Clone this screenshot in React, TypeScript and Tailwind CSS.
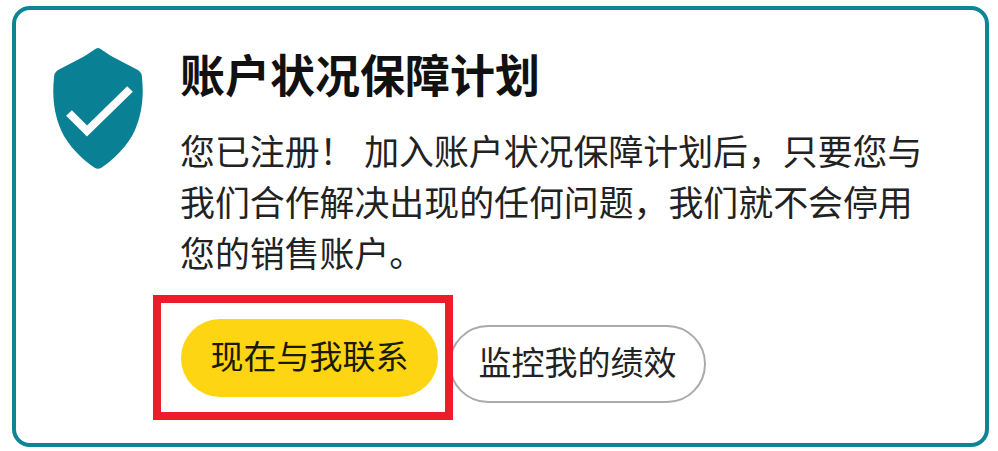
const cjk = "font-['Liberation_Sans','Noto_Sans_CJK_SC',sans-serif]";

function ShieldIcon() {
  return (
    <svg viewBox="0 0 90 121" className="h-[121px] w-[90px] shrink-0" aria-hidden="true">
      <path
        d="M45 0C47 0 50 3 60 9L83 21C87 23 89 25 89 30C91 48 89 66 82 82C75 98 60 112 48 120C46 121 44 121 42 120C30 112 15 98 8 82C1 66 -1 48 1 30C1 25 3 23 7 21L30 9C40 3 43 0 45 0Z"
        fill="#0a8094"
      />
      <path d="M16 65L34 83L77 41" fill="none" stroke="#fff" strokeWidth="8" />
    </svg>
  );
}

export default function App() {
  return (
    <div className={`h-[451px] w-[998px] overflow-hidden bg-white pl-3 pt-1.5 ${cjk}`}>
      <div className="relative flex h-[441px] w-[977px] gap-[38px] rounded-[18px] border-[4px] border-[#0f8494] pl-[37px] pt-[38px]">
        <ShieldIcon />
        <div className="flex flex-col">
          <h1 className="ml-[-1px] text-[45px] leading-[60px] font-bold text-[#111]">账户状况保障计划</h1>
          <p className="ml-[-1px] mt-[19px] w-[780px] text-[34.9px] leading-[51px] text-[#222]">
            您已注册！ 加入账户状况保障计划后，只要您与
            <br />
            我们合作解决出现的任何问题，我们就不会停用
            <br />
            您的销售账户。
          </p>
          <div className="mt-[39px] flex items-start gap-[11px]">
            <button className="h-[78px] w-[257px] rounded-full bg-[#fdd512] text-[33px] text-[#1a1a00]">
              现在与我联系
            </button>
            <button className="mt-1.5 h-[78px] w-[257px] rounded-full border-2 border-[#aaa] bg-white text-[33px] text-[#222]">
              监控我的绩效
            </button>
          </div>
        </div>
        <div className="absolute left-[137px] top-[285px] h-[125px] w-[300px] border-[8px] border-[#ed1c2a]" />
      </div>
    </div>
  );
}
